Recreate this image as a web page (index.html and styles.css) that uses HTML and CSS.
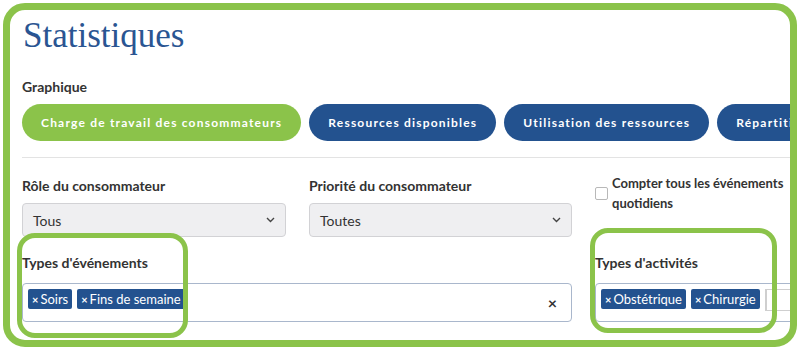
FILE: index.html
```html
<!DOCTYPE html>
<html lang="fr">
<head>
    <meta charset="UTF-8">
    <meta name="viewport" content="width=device-width, initial-scale=1.0">
    <title>Statistiques</title>
    <link rel="stylesheet" href="styles.css">
</head>
<body>

    <div class="frame">
        <div class="content">
            <h1 class="page-title">Statistiques</h1>

            <div class="field-label">Graphique</div>
            <div class="chart-tabs">
                <button class="chart-tab active">Charge de travail des consommateurs</button>
                <button class="chart-tab">Ressources disponibles</button>
                <button class="chart-tab">Utilisation des ressources</button>
                <button class="chart-tab">Répartition des ressources</button>
            </div>

            <hr class="divider">

            <div class="filters">
                <div class="filter">
                    <div class="field-label">Rôle du consommateur</div>
                    <div class="select-box">
                        <span>Tous</span>
                        <svg class="chevron" width="9" height="6" viewBox="0 0 9 6"><path d="M1 1l3.5 3.5L8 1" fill="none" stroke="#444" stroke-width="1.4"/></svg>
                    </div>
                </div>

                <div class="filter">
                    <div class="field-label">Priorité du consommateur</div>
                    <div class="select-box">
                        <span>Toutes</span>
                        <svg class="chevron" width="9" height="6" viewBox="0 0 9 6"><path d="M1 1l3.5 3.5L8 1" fill="none" stroke="#444" stroke-width="1.4"/></svg>
                    </div>
                </div>

                <div class="filter check-filter">
                    <span class="checkbox"></span>
                    <span class="check-text">Compter tous les événements quotidiens</span>
                </div>

                <div class="filter wide">
                    <div class="field-label">Types d'événements</div>
                    <div class="multi-box">
                        <span class="tag"><b>×</b>Soirs</span>
                        <span class="tag"><b>×</b>Fins de semaine</span>
                        <span class="clear-all">×</span>
                    </div>
                </div>

                <div class="filter">
                    <div class="field-label">Types d'activités</div>
                    <div class="multi-box">
                        <span class="tag"><b>×</b>Obstétrique</span>
                        <span class="tag"><b>×</b>Chirurgie</span>
                        <span class="tag-input"></span>
                    </div>
                </div>
            </div>
        </div>

        <!-- highlight callouts -->
        <div class="callout callout-events"></div>
        <div class="callout callout-activities"></div>
    </div>

</body>
</html>
```

FILE: styles.css
```css
/* Global Styles */
body {
    margin: 0;
    padding: 0;
    background-color: white;
    font-family: Lato, "Open Sans", sans-serif;
    color: #333;
}

.frame {
    position: relative;
    box-sizing: border-box;
    width: 794px;
    height: 344px;
    margin: 3px;
    border: 7px solid #8bc34a;
    border-radius: 22px;
    overflow: hidden;
    background-color: white;
}

.content {
    padding: 5px 0 0 12px;
    width: 900px;
}

.page-title {
    font-family: "Liberation Serif", "Times New Roman", serif;
    font-weight: normal;
    font-size: 35px;
    line-height: 41px;
    color: #2a5592;
    margin: 0 0 23px 1px;
}

.field-label {
    font-size: 14px;
    font-weight: bold;
    line-height: 16px;
    color: #333;
}

.chart-tabs {
    display: flex;
    gap: 8px;
    margin-top: 9px;
}

.chart-tab {
    height: 37px;
    padding: 0 19px;
    border: none;
    border-radius: 19px;
    background-color: #23528f;
    color: white;
    font-family: Lato, sans-serif;
    font-size: 12px;
    font-weight: bold;
    letter-spacing: 1.2px;
    white-space: nowrap;
    flex-shrink: 0;
}

.chart-tab.active {
    background-color: #8bc34a;
}

.divider {
    border: none;
    border-top: 1px solid #e3e3e3;
    margin: 16px 0 0 0;
    width: 770px;
}

.filters {
    display: grid;
    grid-template-columns: 264px 263px 264px;
    column-gap: 23px;
    row-gap: 18px;
    margin-top: 20px;
}

.filter.wide {
    grid-column: span 2;
}

.select-box {
    box-sizing: border-box;
    display: flex;
    justify-content: space-between;
    align-items: center;
    height: 34px;
    margin-top: 9px;
    padding: 0 10px 0 10px;
    background-color: #efeff1;
    border: 1px solid #d2d2d5;
    border-radius: 4px;
    font-size: 14px;
}

.check-filter {
    display: flex;
    align-items: center;
    align-self: start;
    gap: 4px;
    margin-top: -5px;
}

.checkbox {
    width: 11px;
    height: 11px;
    border: 1px solid #b8b8b8;
    border-radius: 2px;
    flex-shrink: 0;
}

.check-text {
    font-size: 13px;
    font-weight: bold;
    line-height: 20px;
    width: 180px;
}

.multi-box {
    box-sizing: border-box;
    position: relative;
    display: flex;
    align-items: flex-start;
    gap: 5px;
    height: 39px;
    margin-top: 12px;
    padding: 5px 5px;
    border: 1px solid #a9b7cc;
    border-radius: 4px;
}

.tag {
    display: inline-flex;
    align-items: center;
    gap: 2px;
    height: 20px;
    padding: 0 4px;
    background-color: #23528f;
    border-radius: 2px;
    color: white;
    font-size: 13px;
}

.tag b {
    font-size: 11px;
}

.tag-input {
    width: 40px;
    height: 20px;
    border: 1px solid #cfcfcf;
    border-left: 2px solid #cfcfcf;
}

.clear-all {
    position: absolute;
    right: 14px;
    top: 9px;
    font-size: 16px;
    font-weight: bold;
    color: #333;
}

.callout {
    position: absolute;
    box-sizing: border-box;
    border: 5px solid #8bc34a;
    border-radius: 18px;
}

.callout-events {
    left: 7px;
    top: 223px;
    width: 171px;
    height: 105px;
}

.callout-activities {
    left: 580px;
    top: 218px;
    width: 187px;
    height: 105px;
}
```
